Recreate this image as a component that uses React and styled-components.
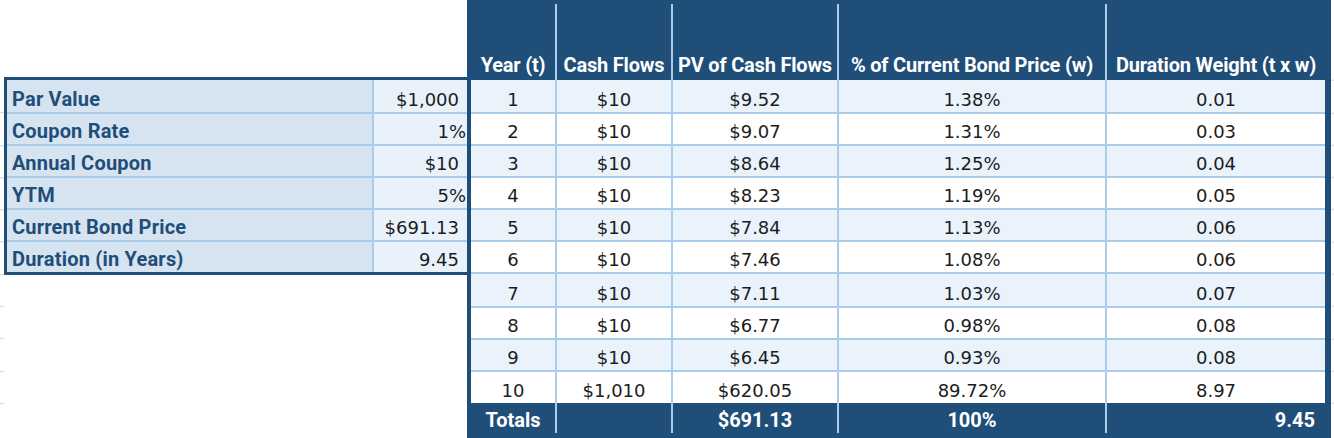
import React from 'react';
import styled, { createGlobalStyle } from 'styled-components';

const C = {
  dark: '#1F4E79',
  line: '#A9CDEB',
  odd: '#EAF3FB',
  even: '#FFFFFF',
  label: '#D6E4F1',
  value: '#E9F2FB',
  text: '#1c1c1c',
  grid: '#d4d4d4',
};

const COLS = '84px 114px 164px 266px 218px';
const NUM_FONT = "'DejaVu Sans', 'Liberation Sans', sans-serif";
const HEAD_FONT = "Roboto, 'Liberation Sans', sans-serif";

const Global = createGlobalStyle`
  html, body { margin: 0; padding: 0; background: #fff; }
  body { width: 1334px; height: 438px; overflow: hidden; }
`;

const Page = styled.div`
  display: flex;
  align-items: flex-start;
  width: 1334px;
  height: 438px;
  overflow: hidden;
  background: #fff;
`;

const Gutter = styled.div`
  flex: 0 0 ${(p) => p.$w}px;
  margin-top: ${(p) => p.$top}px;
  height: ${(p) => 438 - p.$top}px;
  background-image: repeating-linear-gradient(
    to bottom,
    transparent 0,
    transparent 31.3px,
    ${C.grid} 31.3px,
    ${C.grid} 32.3px
  );
  background-position: 0 ${(p) => p.$shift}px;
`;

const LeftArea = styled.div`
  flex: 0 0 463px;
  padding-top: 77px;
`;

const InputTable = styled.div`
  display: flex;
  flex-direction: column;
  gap: 2px;
  background: ${C.line};
  border: 3px solid ${C.dark};
  border-right: none;
`;

const InputRow = styled.div`
  display: grid;
  grid-template-columns: 365px 93px;
  column-gap: 2px;
  height: ${(p) => p.$h}px;
`;

const LabelCell = styled.div`
  display: flex;
  align-items: flex-end;
  padding: 0 0 3px 5px;
  background: ${C.label};
  color: ${C.dark};
  font-family: ${HEAD_FONT};
  font-weight: 700;
  font-size: 20px;
  line-height: 20px;
  letter-spacing: 0.2px;
  white-space: nowrap;
`;

const ValueCell = styled.div`
  display: flex;
  align-items: flex-end;
  justify-content: flex-end;
  padding: 0 ${(p) => (p.$pct ? 1 : 8)}px 3px 0;
  background: ${C.value};
  color: ${C.text};
  font-family: ${NUM_FONT};
  font-size: 18px;
  line-height: 18px;
  white-space: nowrap;
`;

const MainTable = styled.div`
  flex: 0 0 864px;
  background: ${C.dark};
  padding: 0 6px 5px 4px;
  box-sizing: border-box;
  height: 438px;
`;

const GridRow = styled.div`
  display: grid;
  grid-template-columns: ${COLS};
  column-gap: 2px;
  background: ${C.line};
  height: ${(p) => p.$h}px;
`;

const HeaderWrap = styled.div`
  padding-top: 4px;
`;

const HeadCell = styled.div`
  display: flex;
  align-items: flex-end;
  justify-content: center;
  padding-bottom: 5px;
  background: ${C.dark};
  color: #fff;
  font-family: ${HEAD_FONT};
  font-weight: 700;
  font-size: 20px;
  line-height: 20px;
  letter-spacing: -0.2px;
  white-space: nowrap;
`;

const Body = styled.div`
  display: flex;
  flex-direction: column;
  gap: 2px;
  background: ${C.line};
`;

const BodyCell = styled.div`
  display: flex;
  align-items: flex-end;
  justify-content: center;
  padding-bottom: 3px;
  background: ${(p) => (p.$alt ? C.odd : C.even)};
  color: ${C.text};
  font-family: ${NUM_FONT};
  font-size: 18px;
  line-height: 18px;
  white-space: nowrap;
`;

const TotalCell = styled.div`
  display: flex;
  align-items: flex-end;
  justify-content: ${(p) => (p.$right ? 'flex-end' : 'center')};
  padding: 0 ${(p) => (p.$right ? 10 : 0)}px 3px 0;
  background: ${C.dark};
  color: #fff;
  font-family: ${HEAD_FONT};
  font-weight: 700;
  font-size: 20px;
  line-height: 20px;
  white-space: nowrap;
`;

const inputs = [
  { label: 'Par Value', value: '$1,000' },
  { label: 'Coupon Rate', value: '1%', pct: true },
  { label: 'Annual Coupon', value: '$10' },
  { label: 'YTM', value: '5%', pct: true },
  { label: 'Current Bond Price', value: '$691.13' },
  { label: 'Duration (in Years)', value: '9.45' },
];

const heads = ['Year (t)', 'Cash Flows', 'PV of Cash Flows', '% of Current Bond Price (w)', 'Duration Weight (t x w)'];

const rows = [
  ['1', '$10', '$9.52', '1.38%', '0.01'],
  ['2', '$10', '$9.07', '1.31%', '0.03'],
  ['3', '$10', '$8.64', '1.25%', '0.04'],
  ['4', '$10', '$8.23', '1.19%', '0.05'],
  ['5', '$10', '$7.84', '1.13%', '0.06'],
  ['6', '$10', '$7.46', '1.08%', '0.06'],
  ['7', '$10', '$7.11', '1.03%', '0.07'],
  ['8', '$10', '$6.77', '0.98%', '0.08'],
  ['9', '$10', '$6.45', '0.93%', '0.08'],
  ['10', '$1,010', '$620.05', '89.72%', '8.97'],
];

const rowHeights = [32, 30, 30, 30, 30, 30, 32, 30, 30, 31];

export default function App() {
  return (
    <>
      <Global />
      <Page>
        <Gutter $w={4} $top={100} $shift={-18.8} />
        <LeftArea>
          <InputTable>
            {inputs.map((r, i) => (
              <InputRow key={r.label} $h={rowHeights[i]}>
                <LabelCell>{r.label}</LabelCell>
                <ValueCell $pct={r.pct}>{r.value}</ValueCell>
              </InputRow>
            ))}
          </InputTable>
        </LeftArea>
        <MainTable>
          <HeaderWrap>
            <GridRow $h={76}>
              {heads.map((h) => (
                <HeadCell key={h}>{h}</HeadCell>
              ))}
            </GridRow>
          </HeaderWrap>
          <Body>
            {rows.map((r, i) => (
              <GridRow key={r[0]} $h={rowHeights[i]}>
                {r.map((v, j) => (
                  <BodyCell key={j} $alt={i % 2 === 0}>{v}</BodyCell>
                ))}
              </GridRow>
            ))}
          </Body>
          <GridRow $h={30}>
            <TotalCell>Totals</TotalCell>
            <TotalCell />
            <TotalCell>$691.13</TotalCell>
            <TotalCell>100%</TotalCell>
            <TotalCell $right>9.45</TotalCell>
          </GridRow>
        </MainTable>
        <Gutter $w={3} $top={70} $shift={-21.3} />
      </Page>
    </>
  );
}
